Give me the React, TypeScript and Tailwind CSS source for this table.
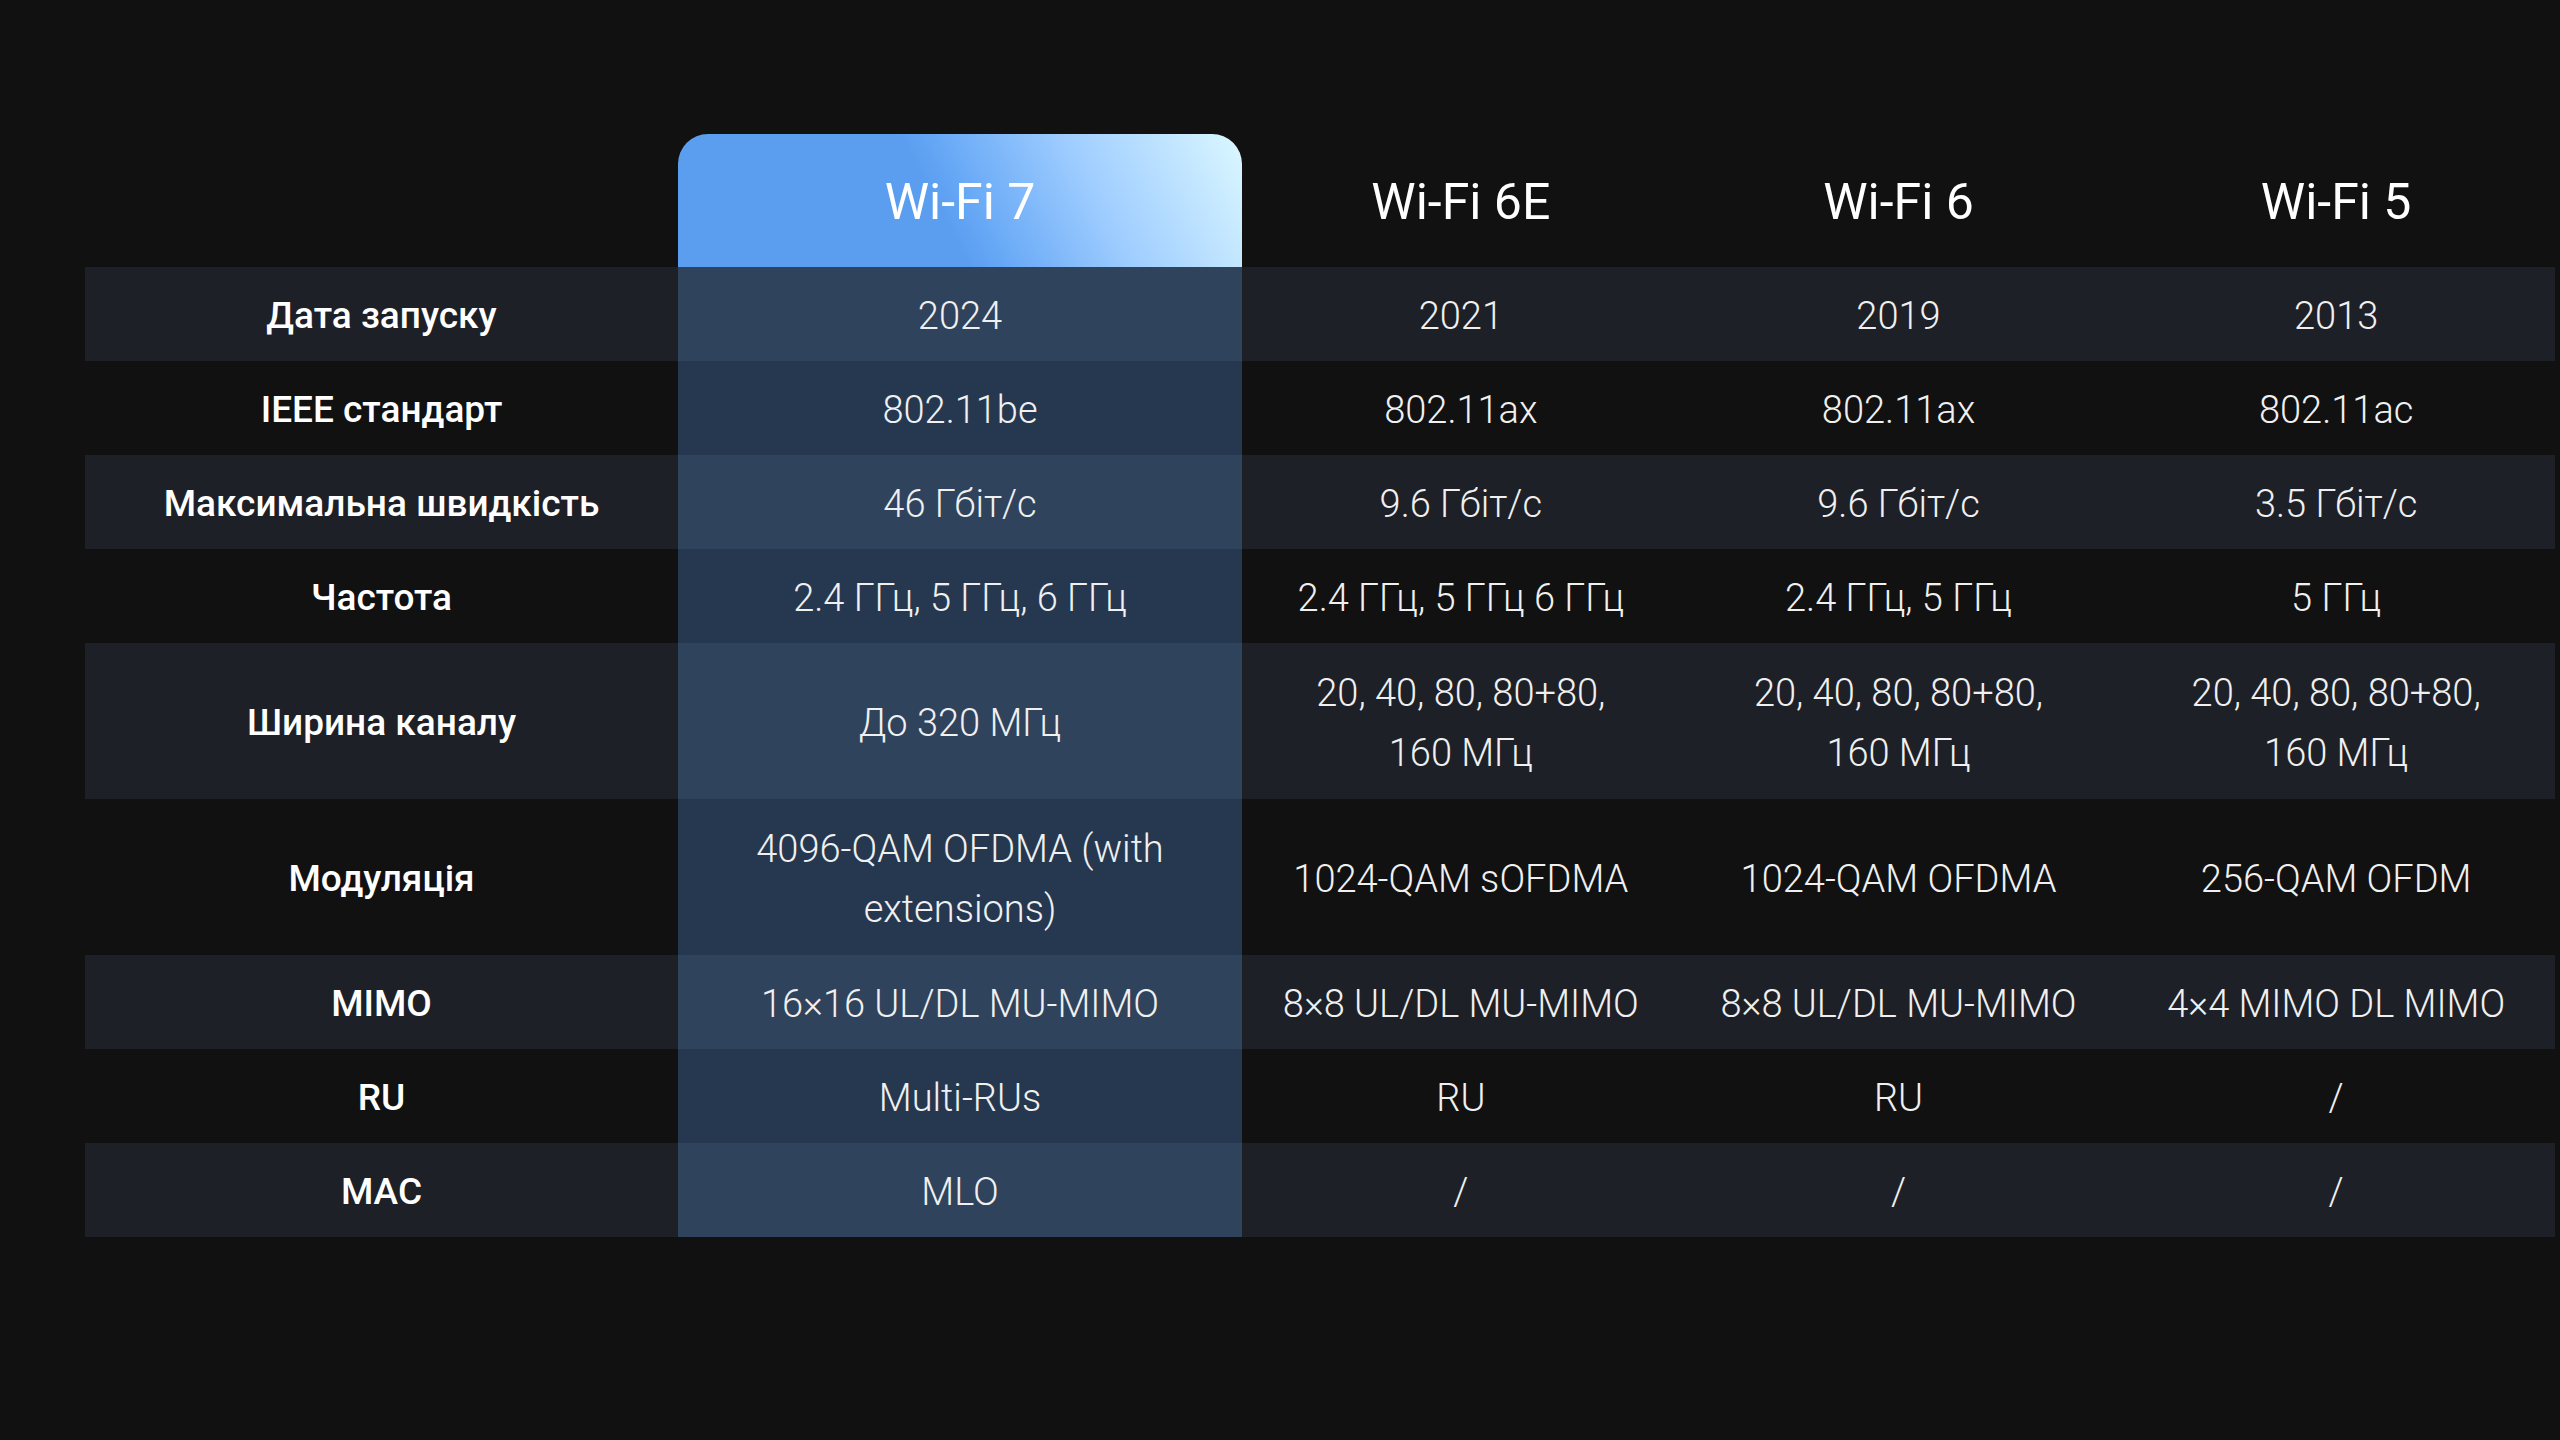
const columns = ["Wi-Fi 7", "Wi-Fi 6E", "Wi-Fi 6", "Wi-Fi 5"];

const rows = [
  { label: "Дата запуску", values: ["2024", "2021", "2019", "2013"] },
  { label: "IEEE стандарт", values: ["802.11be", "802.11ax", "802.11ax", "802.11ac"] },
  { label: "Максимальна швидкість", values: ["46 Гбіт/с", "9.6 Гбіт/с", "9.6 Гбіт/с", "3.5 Гбіт/с"] },
  { label: "Частота", values: ["2.4 ГГц, 5 ГГц, 6 ГГц", "2.4 ГГц, 5 ГГц 6 ГГц", "2.4 ГГц, 5 ГГц", "5 ГГц"] },
  {
    label: "Ширина каналу",
    tall: true,
    values: [
      "До 320 МГц",
      "20, 40, 80, 80+80, 160\u00a0МГц",
      "20, 40, 80, 80+80, 160\u00a0МГц",
      "20, 40, 80, 80+80, 160\u00a0МГц",
    ],
  },
  {
    label: "Модуляція",
    tall: true,
    values: ["4096-QAM OFDMA (with extensions)", "1024-QAM sOFDMA", "1024-QAM OFDMA", "256-QAM OFDM"],
  },
  { label: "MIMO", values: ["16×16 UL/DL MU-MIMO", "8×8 UL/DL MU-MIMO", "8×8 UL/DL MU-MIMO", "4×4 MIMO DL MIMO"] },
  { label: "RU", values: ["Multi-RUs", "RU", "RU", "/"] },
  { label: "MAC", values: ["MLO", "/", "/", "/"] },
];

export default function App() {
  return (
    <div className="min-h-screen w-full bg-[#111111] pt-[134px] font-['Roboto','Noto_Sans',sans-serif]">
      <div className="ml-[85px] w-[2470px]">
        {/* Header */}
        <div className="grid grid-cols-[593px_564px_1fr_1fr_1fr] h-[133px]">
          <div />
          {columns.map((col, i) => (
            <div
              key={col}
              className={`flex items-center justify-center pt-1 text-[50px] font-normal text-white ${
                i === 0
                  ? "rounded-t-[30px] bg-[linear-gradient(62deg,#5b9ef0_0%,#5b9ef0_46%,#68a9f6_52%,#9fcdff_72%,#dcf8ff_100%)]"
                  : ""
              }`}
            >
              {col}
            </div>
          ))}
        </div>

        {/* Rows */}
        {rows.map((row, ri) => {
          const striped = ri % 2 === 0;
          return (
            <div
              key={row.label}
              className={`grid grid-cols-[593px_564px_1fr_1fr_1fr] ${row.tall ? "h-[156px]" : "h-[94px]"} ${
                striped ? "bg-[#1e2027]" : ""
              }`}
            >
              <div className="flex items-center justify-center pt-1 text-[37px] font-medium text-white">
                {row.label}
              </div>
              {row.values.map((v, vi) => (
                <div
                  key={vi}
                  className={`flex items-center justify-center pt-1 text-center text-[38px] font-light leading-[60px] text-[#f0f0f0] ${
                    vi === 0 ? (striped ? "bg-[#2f435d] px-[64px]" : "bg-[#263850] px-[64px]") : "px-[30px]"
                  }`}
                >
                  {v}
                </div>
              ))}
            </div>
          );
        })}
      </div>
    </div>
  );
}
